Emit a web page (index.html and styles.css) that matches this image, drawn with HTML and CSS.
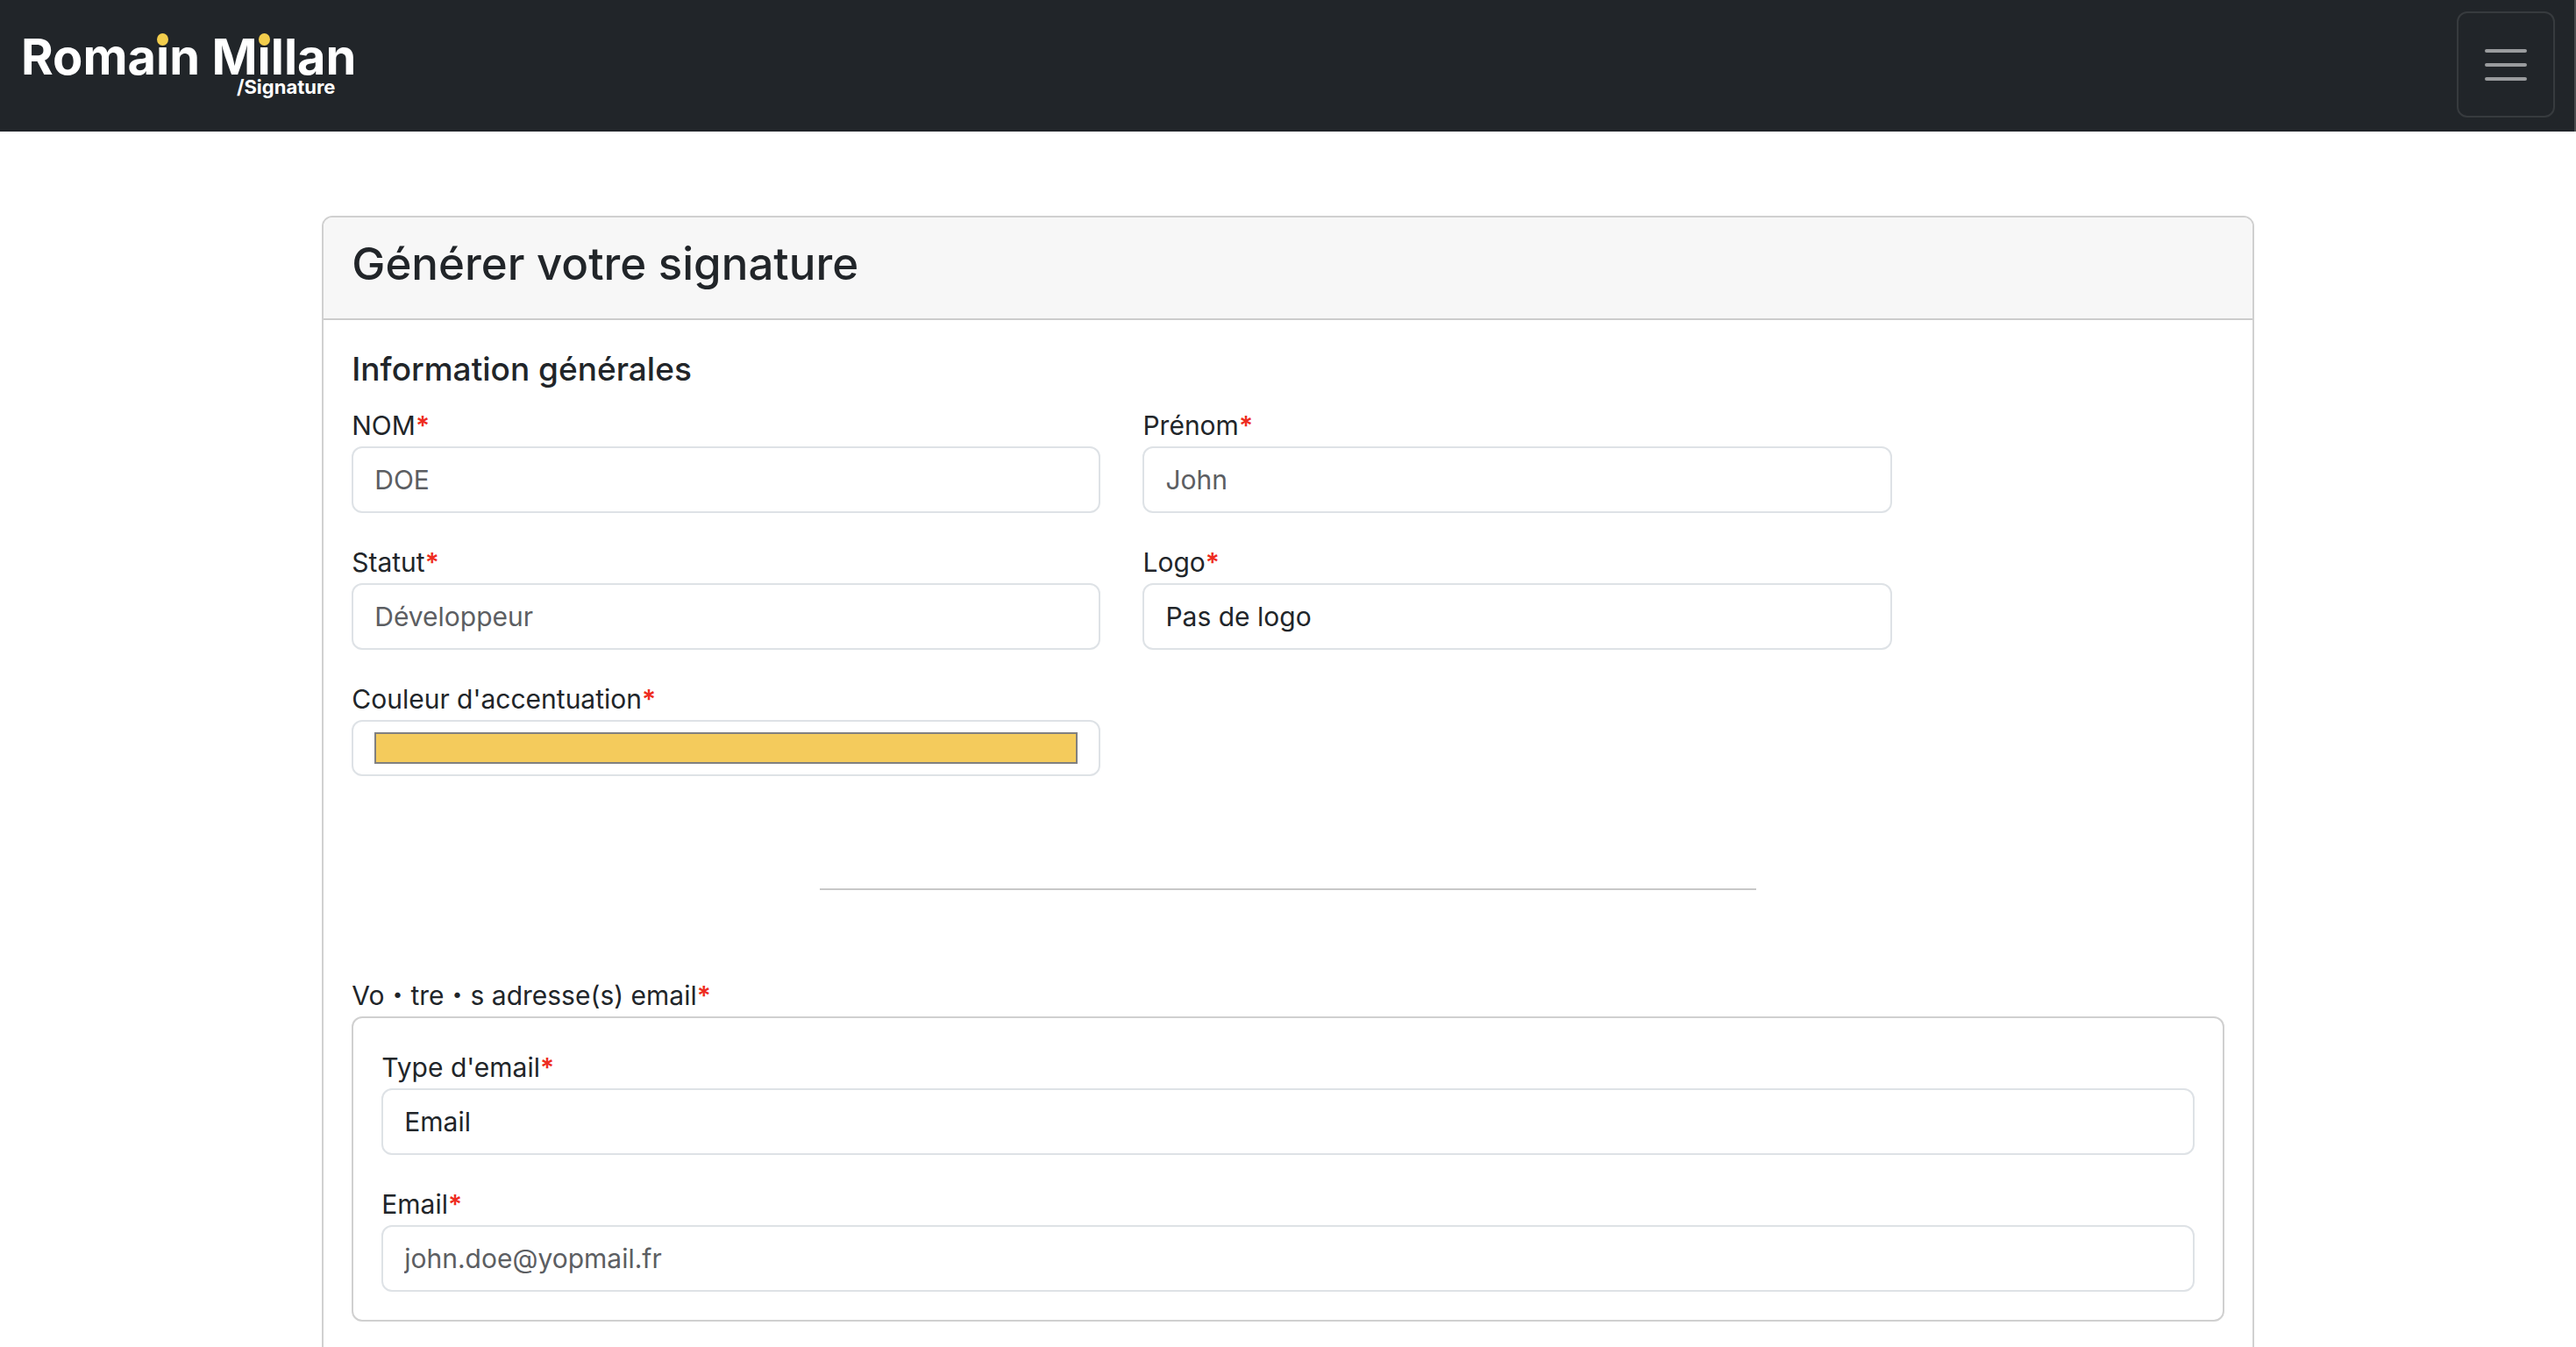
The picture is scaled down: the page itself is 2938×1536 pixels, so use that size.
FILE: index.html
```html
<!DOCTYPE html>
<html lang="fr">
<head>
<meta charset="utf-8">
<meta name="viewport" content="width=device-width, initial-scale=1">
<title>Générer votre signature</title>
<link rel="stylesheet" href="styles.css">
</head>
<body>
<header class="navbar">
  <a class="brand" href="#">
    <span class="brand-name">Roma<span class="brand-i">i</span>n M<span class="brand-i">i</span>llan</span>
    <span class="brand-sub">/Signature</span>
  </a>
  <button class="toggler" type="button" aria-label="Menu">
    <svg class="toggler-icon" viewBox="0 0 30 30" aria-hidden="true"><path d="M4 7h22M4 15h22M4 23h22" fill="none" stroke="currentColor" stroke-width="2" stroke-linecap="round" stroke-miterlimit="10"/></svg>
  </button>
</header>
<main class="card">
  <div class="card-header"><h1 class="card-title">Générer votre signature</h1></div>
  <form class="card-body">
    <h2 class="section-title">Information générales</h2>
    <div class="fields">
      <div class="field">
        <label for="nom">NOM<span class="required">*</span></label>
        <input class="control" id="nom" type="text" placeholder="DOE">
      </div>
      <div class="field">
        <label for="prenom">Prénom<span class="required">*</span></label>
        <input class="control" id="prenom" type="text" placeholder="John">
      </div>
      <div class="field">
        <label for="statut">Statut<span class="required">*</span></label>
        <input class="control" id="statut" type="text" placeholder="Développeur">
      </div>
      <div class="field">
        <label for="logo">Logo<span class="required">*</span></label>
        <select class="control" id="logo"><option>Pas de logo</option></select>
      </div>
      <div class="field">
        <label for="couleur">Couleur d'accentuation<span class="required">*</span></label>
        <input class="control control-color" id="couleur" type="color" value="#f4cb5c">
      </div>
    </div>
    <hr class="divider">
    <div class="group-label" id="emails">Vo・tre・s adresse(s) email<span class="required">*</span></div>
    <div class="group" role="group" aria-labelledby="emails">
      <div class="field">
        <label for="type">Type d'email<span class="required">*</span></label>
        <select class="control" id="type"><option>Email</option></select>
      </div>
      <div class="field">
        <label for="email">Email<span class="required">*</span></label>
        <input class="control" id="email" type="email" placeholder="john.doe@yopmail.fr">
      </div>
    </div>
  </form>
</main>
</body>
</html>
```

FILE: styles.css
```css
*,
*::before,
*::after {
  box-sizing: border-box;
}

body {
  margin: 0;
  background: #fff;
  color: #212529;
  font-family: Inter, "Noto Sans CJK JP", sans-serif;
  font-size: 30px;
  line-height: 48px;
}

.navbar {
  display: flex;
  align-items: center;
  justify-content: space-between;
  padding: 13px 22px 16px 24px;
  border-right: 2px solid #4b4c4e;
  background: #212529;
}

.brand {
  display: flex;
  flex-direction: column;
  color: #fff;
  font-weight: 700;
  text-decoration: none;
}

.brand-name {
  font-size: 56px;
  line-height: 50px;
}

.brand-i {
  position: relative;
}

.brand-i::before {
  content: "";
  position: absolute;
  top: 7px;
  left: 1px;
  width: 13px;
  height: 14px;
  border-radius: 50%;
  background: #f2cd4c;
}

.brand-sub {
  align-self: flex-end;
  padding-right: 24px;
  font-size: 22px;
  line-height: 18px;
}

.toggler {
  display: flex;
  align-items: center;
  height: 121px;
  padding: 0 24px;
  border: 2px solid rgba(255, 255, 255, 0.1);
  border-radius: 12px;
  background: none;
  color: rgba(255, 255, 255, 0.55);
}

.toggler-icon {
  width: 60px;
  height: 60px;
}

.card {
  width: 75%;
  margin: 96px auto;
  border: 2px solid #d0d0d0;
  border-radius: 12px;
  overflow: hidden;
}

.card-header {
  padding: 19px 32px 29px;
  border-bottom: 2px solid #cccccc;
  background: #f7f7f7;
}

.card-title {
  margin: 0;
  font-size: 51px;
  font-weight: 500;
  line-height: 67px;
}

.card-body {
  padding: 32px 32px 96px;
}

.section-title {
  margin: 0 0 16px;
  font-size: 37px;
  font-weight: 500;
  line-height: 48px;
}

.fields {
  display: grid;
  grid-template-columns: 40% 40%;
  gap: 32px 48px;
}

.field label {
  display: block;
}

.required {
  color: #ee2c20;
  font-weight: 600;
}

.control {
  display: block;
  width: 100%;
  height: 76px;
  margin: 0;
  padding: 12px 24px;
  border: 2px solid #dee2e6;
  border-radius: 12px;
  background: #fff;
  color: #212529;
  font: inherit;
  appearance: none;
}

.control::placeholder {
  color: #5c5e62;
  opacity: 1;
}

.control-color {
  height: 64px;
}

.control-color::-webkit-color-swatch-wrapper {
  padding: 0;
}

.control-color::-webkit-color-swatch {
  border: 2px solid #808080;
  border-radius: 0;
}

.divider {
  width: 50%;
  margin: 128px auto 96px;
  border: 0;
  border-top: 2px solid #c8c8c8;
}

.group {
  display: grid;
  gap: 32px;
  padding: 32px;
  border: 2px solid #d0d0d0;
  border-radius: 12px;
}
```
